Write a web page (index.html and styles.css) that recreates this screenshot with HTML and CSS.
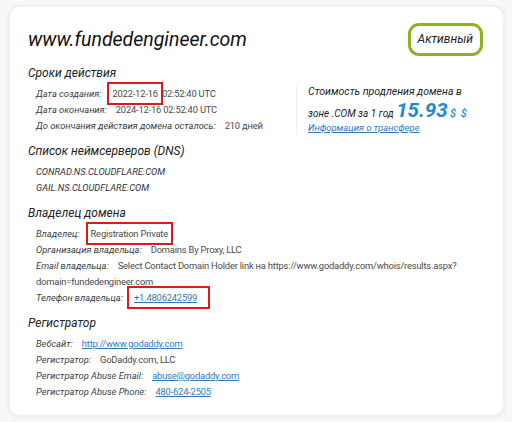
FILE: index.html
```html
<!DOCTYPE html>
<html lang="ru">
<head>
    <meta charset="UTF-8">
    <meta name="viewport" content="width=device-width, initial-scale=1.0">
    <title>fundedengineer.com - Whois</title>
    <link rel="stylesheet" href="styles.css">
</head>
<body>
    <div class="card">
        <div class="header">
            <h1>www.fundedengineer.com</h1>
            <span class="status">Активный</span>
        </div>

        <h2>Сроки действия</h2>
        <div class="split">
            <div class="rows">
                <div class="row"><span class="label">Дата создания:</span><span class="value"><span class="mark">2022-12-16</span> 02:52:40 UTC</span></div>
                <div class="row"><span class="label">Дата окончания:</span><span class="value">2024-12-16 02:52:40 UTC</span></div>
                <div class="row"><span class="label">До окончания действия домена осталось:</span><span class="value">210 дней</span></div>
            </div>
            <div class="price">
                <p>Стоимость продления домена в</p>
                <p class="cost">зоне .COM за 1 год <b class="amount">15.93</b> <span class="cur">$ $</span></p>
                <a href="#">Информация о трансфере</a>
            </div>
        </div>

        <h2>Список неймсерверов (DNS)</h2>
        <div class="rows">
            <div class="row"><span class="label ns">CONRAD.NS.CLOUDFLARE.COM</span></div>
            <div class="row"><span class="label ns">GAIL.NS.CLOUDFLARE.COM</span></div>
        </div>

        <h2>Владелец домена</h2>
        <div class="rows">
            <div class="row"><span class="label">Владелец:</span><span class="value"><span class="mark">Registration Private</span></span></div>
            <div class="row"><span class="label">Организация владельца:</span><span class="value">Domains By Proxy, LLC</span></div>
            <div class="row"><span class="label">Email владельца:</span><span class="value">Select Contact Domain Holder link на https://www.godaddy.com/whois/results.aspx?</span></div>
            <div class="row"><span class="value flush">domain=fundedengineer.com</span></div>
            <div class="row"><span class="label">Телефон владельца:</span><span class="value"><a class="mark wide" href="#">+1.4806242599</a></span></div>
        </div>

        <h2>Регистратор</h2>
        <div class="rows">
            <div class="row"><span class="label">Вебсайт:</span><span class="value"><a href="#">http://www.godaddy.com</a></span></div>
            <div class="row"><span class="label">Регистратор:</span><span class="value">GoDaddy.com, LLC</span></div>
            <div class="row"><span class="label">Регистратор Abuse Email:</span><span class="value"><a href="#">abuse@godaddy.com</a></span></div>
            <div class="row"><span class="label">Регистратор Abuse Phone:</span><span class="value"><a href="#">480-624-2505</a></span></div>
        </div>
    </div>
</body>
</html>
```

FILE: styles.css
```css
body { margin: 0; background: #f8f8f8; font-family: Roboto, "Noto Sans", sans-serif; color: #333; }
.card { margin: 5px 7px 9px 8px; padding: 18px 20px 15px 18px; background: #fff; border: 2px solid #f0f0f0; border-radius: 12px; box-shadow: 0 1px 3px rgba(0,0,0,0.06); }
.header { display: flex; justify-content: space-between; align-items: flex-start; }
h1 { margin: 0; font-size: 19.5px; line-height: 30px; font-style: italic; font-weight: 400; color: #111; }
.status { margin-top: -2px; padding: 0 7px; height: 27px; line-height: 27px; border: 3px solid #8cb21f; border-radius: 11px; font-size: 12px; font-style: italic; color: #222; }
h2 { margin: 7px 0 3px; font-size: 12px; line-height: 20px; font-style: italic; font-weight: 400; color: #222; }
.split { display: flex; align-items: flex-start; }
.split .rows { width: 260px; }
.rows { padding-left: 8px; }
.row { display: flex; height: 16px; line-height: 16px; font-size: 9.3px; white-space: nowrap; }
.label { font-style: italic; color: #3d3d3d; }
.label.ns { font-size: 9.3px; color: #333; }
.value { margin-left: 9px; font-size: 9.4px; letter-spacing: -0.2px; color: #4a4a4a; }
.value.flush { margin-left: 0; }
.mark { padding: 3px 2px; outline: 2px solid #e01818; outline-offset: 1px; }
.mark.wide { margin-left: -2px; padding: 3px 10px 3px 4px; }
a { color: #2f78b6; }
.price { height: 50px; margin-top: -2px; padding-left: 11px; border-left: 1px solid #f0f0f0; font-style: italic; font-size: 10.5px; color: #222; white-space: nowrap; }
.price p { margin: 0; height: 16px; line-height: 16px; }
.price .cost { height: 22px; line-height: 22px; font-size: 10px; }
.amount { font-size: 20.5px; line-height: 20px; color: #1a8ad2; font-weight: 700; }
.cur { color: #1a8ad2; font-size: 11px; font-weight: 500; letter-spacing: 1px; }
.price a { display: block; font-size: 9.4px; line-height: 12px; }
```
